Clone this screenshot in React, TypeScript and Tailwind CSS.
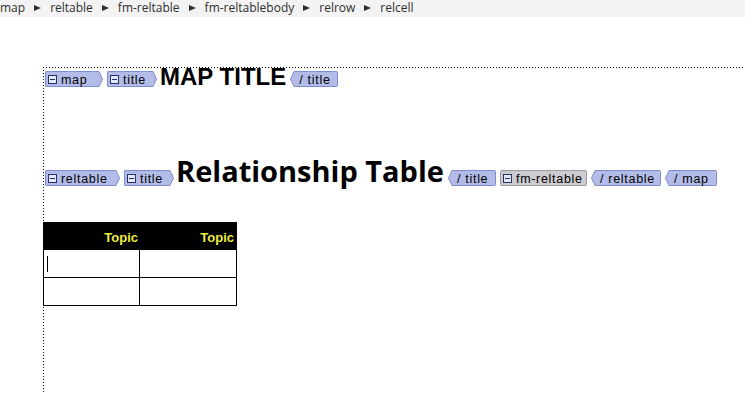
import React from 'react';

const crumbs = ['map', 'reltable', 'fm-reltable', 'fm-reltablebody', 'relrow', 'relcell'];

const MinusBox = () => (
  <span className="flex h-[9px] w-[9px] shrink-0 items-center justify-center self-center border border-[#26306a] bg-[#e4e8fa]">
    <span className="h-px w-[5px] bg-[#26306a]" />
  </span>
);

const StartTag = ({ label, w }: { label: string; w: string }) => (
  <span className={`flex h-4 shrink-0 ${w}`}>
    <span className="flex flex-1 gap-[4px] rounded-l-[2px] border-y border-l border-[#7f8dcc] bg-[#b3bce9] pl-[2px] font-['Liberation_Sans',Arial,sans-serif] text-[12.5px] tracking-[0.7px] text-black">
      <MinusBox />
      <span className="mt-[2px] self-start leading-[12px]">{label}</span>
    </span>
    <svg width="5" height="16" viewBox="0 0 5 16" className="shrink-0">
      <path d="M0 0.5 L1 0.5 L4.5 8 L1 15.5 L0 15.5 Z" fill="#b3bce9" />
      <path d="M0 0.5 L1 0.5 L4.5 8 L1 15.5 L0 15.5" fill="none" stroke="#7f8dcc" />
    </svg>
  </span>
);

const EndTag = ({ label, w }: { label: string; w: string }) => (
  <span className={`flex h-4 shrink-0 ${w}`}>
    <svg width="5" height="16" viewBox="0 0 5 16" className="shrink-0">
      <path d="M5 0.5 L4 0.5 L0.5 8 L4 15.5 L5 15.5 Z" fill="#b3bce9" />
      <path d="M5 0.5 L4 0.5 L0.5 8 L4 15.5 L5 15.5" fill="none" stroke="#7f8dcc" />
    </svg>
    <span className="flex flex-1 rounded-r-[2px] border-y border-r border-[#7f8dcc] bg-[#b3bce9] pl-[4px] font-['Liberation_Sans',Arial,sans-serif] text-[12.5px] tracking-[0.7px] text-black">
      <span className="mt-[2px] leading-[12px]">/ {label}</span>
    </span>
  </span>
);

const GrayTag = ({ label, w }: { label: string; w: string }) => (
  <span className={`flex h-4 shrink-0 gap-[4px] rounded-[2px] border border-[#9a9aa0] bg-[#cbcbd0] pl-[2px] font-['Liberation_Sans',Arial,sans-serif] text-[12.5px] tracking-[0.7px] text-black ${w}`}>
    <MinusBox />
    <span className="mt-[2px] self-start leading-[12px]">{label}</span>
  </span>
);

export default function App() {
  return (
    <div className="h-[394px] w-[745px] overflow-hidden bg-white">
      {/* breadcrumb */}
      <div className="flex h-[17px] items-start gap-[9px] bg-[#f3f3f3] font-['Open_Sans',sans-serif] text-[12px] leading-[13px] text-[#2e2e2e]">
        {crumbs.map((c, i) => (
          <React.Fragment key={c}>
            {i > 0 && (
              <svg width="7" height="6" viewBox="0 0 7 6" className="mt-[5px] shrink-0">
                <path d="M0 0 L7 3 L0 6 Z" fill="#2e2e2e" />
              </svg>
            )}
            <span className="pt-[1px]">{c}</span>
          </React.Fragment>
        ))}
      </div>

      {/* document view */}
      <div className="pl-[43px] pt-[50px]">
        <div className="min-h-[330px] [background-image:linear-gradient(to_right,#000_1px,transparent_1px),linear-gradient(to_bottom,#000_1px,transparent_1px)] [background-repeat:repeat-x,repeat-y] [background-size:3px_1px,1px_3px]">
          <div className="flex items-start gap-1 pl-[2px]">
            <span className="mt-[4px]"><StartTag label="map" w="w-[58px]" /></span>
            <span className="mt-[4px]"><StartTag label="title" w="w-[50px]" /></span>
            <span className="-ml-[1px] font-['Liberation_Sans',Arial,sans-serif] text-[24px] font-bold leading-[20px] text-black">MAP TITLE</span>
            <span className="mt-[4px]"><EndTag label="title" w="w-[48px]" /></span>
          </div>

          <div className="mt-[69px] flex items-start gap-1 pl-[2px]">
            <span className="mt-[14px]"><StartTag label="reltable" w="w-[75px]" /></span>
            <span className="mt-[14px]"><StartTag label="title" w="w-[50px]" /></span>
            <span className="-ml-[2px] font-['Open_Sans',sans-serif] text-[29px] font-bold leading-[29px] text-black">Relationship Table</span>
            <span className="mt-[14px]"><EndTag label="title" w="w-[48px]" /></span>
            <span className="mt-[14px]"><GrayTag label="fm-reltable" w="w-[87px]" /></span>
            <span className="mt-[14px]"><EndTag label="reltable" w="w-[70px]" /></span>
            <span className="mt-[14px]"><EndTag label="map" w="w-[52px]" /></span>
          </div>

          <div className="mt-[36px] w-[194px] border-x border-b border-black font-['Liberation_Sans',Arial,sans-serif]">
            <div className="grid h-[28px] grid-cols-[96px_96px] bg-black text-[13px] font-bold leading-[15px] text-[#ecec3c]">
              <div className="pr-[2px] pt-[8px] text-right">Topic</div>
              <div className="pr-[2px] pt-[8px] text-right">Topic</div>
            </div>
            <div className="grid h-[28px] grid-cols-[96px_96px] border-b border-black">
              <div className="border-r border-black pl-[3px] pt-[6px]">
                <div className="h-[16px] w-px bg-black" />
              </div>
              <div />
            </div>
            <div className="grid h-[27px] grid-cols-[96px_96px]">
              <div className="border-r border-black" />
              <div />
            </div>
          </div>
        </div>
      </div>
    </div>
  );
}
